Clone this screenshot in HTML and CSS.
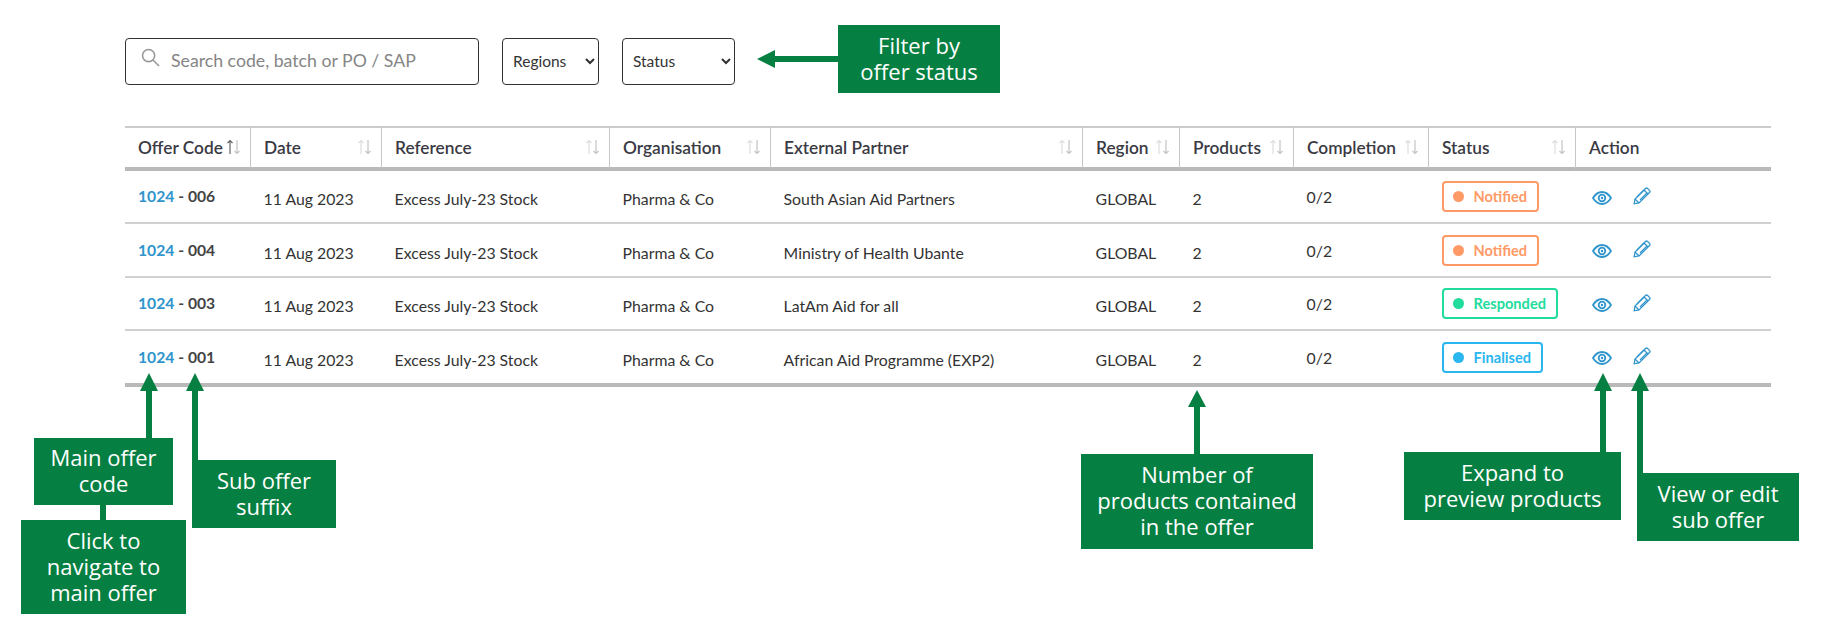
FILE: index.html
```html
<!DOCTYPE html>
<html lang="en">
<head>
<meta charset="utf-8">
<title>Offers</title>
<link rel="stylesheet" href="styles.css">
</head>
<body>
<main class="page">
  <div class="toolbar">
    <label class="search">
      <svg class="search-icon" viewBox="0 0 20 20" aria-hidden="true"><circle cx="8" cy="8" r="6.4"/><path d="M12.6 12.6 19 19"/></svg>
      <input type="text" placeholder="Search code, batch or PO / SAP">
    </label>
    <select class="select select-region"><option>Regions</option></select>
    <select class="select select-status"><option>Status</option></select>
  </div>

  <table class="offers">
    <colgroup>
      <col class="c1"><col class="c2"><col class="c3"><col class="c4"><col class="c5"><col class="c6"><col class="c7"><col class="c8"><col class="c9"><col class="c10">
    </colgroup>
    <thead>
      <tr>
        <th><span class="th-inner">Offer Code<svg class="sort sort-active" viewBox="0 0 15 16"><path class="up" d="M4 15V1.500M1.500 4 4 1.500 6.500 4"/><path class="down" d="M11 1v13.500M8.500 12 11 14.500 13.500 12"/></svg></span></th>
        <th><span class="th-inner">Date<svg class="sort" viewBox="0 0 15 16"><path class="up" d="M4 15V1.500M1.500 4 4 1.500 6.500 4"/><path class="down" d="M11 1v13.500M8.500 12 11 14.500 13.500 12"/></svg></span></th>
        <th><span class="th-inner">Reference<svg class="sort" viewBox="0 0 15 16"><path class="up" d="M4 15V1.500M1.500 4 4 1.500 6.500 4"/><path class="down" d="M11 1v13.500M8.500 12 11 14.500 13.500 12"/></svg></span></th>
        <th><span class="th-inner">Organisation<svg class="sort" viewBox="0 0 15 16"><path class="up" d="M4 15V1.500M1.500 4 4 1.500 6.500 4"/><path class="down" d="M11 1v13.500M8.500 12 11 14.500 13.500 12"/></svg></span></th>
        <th><span class="th-inner">External Partner<svg class="sort" viewBox="0 0 15 16"><path class="up" d="M4 15V1.500M1.500 4 4 1.500 6.500 4"/><path class="down" d="M11 1v13.500M8.500 12 11 14.500 13.500 12"/></svg></span></th>
        <th><span class="th-inner">Region<svg class="sort" viewBox="0 0 15 16"><path class="up" d="M4 15V1.500M1.500 4 4 1.500 6.500 4"/><path class="down" d="M11 1v13.500M8.500 12 11 14.500 13.500 12"/></svg></span></th>
        <th><span class="th-inner">Products<svg class="sort" viewBox="0 0 15 16"><path class="up" d="M4 15V1.500M1.500 4 4 1.500 6.500 4"/><path class="down" d="M11 1v13.500M8.500 12 11 14.500 13.500 12"/></svg></span></th>
        <th><span class="th-inner">Completion<svg class="sort" viewBox="0 0 15 16"><path class="up" d="M4 15V1.500M1.500 4 4 1.500 6.500 4"/><path class="down" d="M11 1v13.500M8.500 12 11 14.500 13.500 12"/></svg></span></th>
        <th><span class="th-inner">Status<svg class="sort" viewBox="0 0 15 16"><path class="up" d="M4 15V1.500M1.500 4 4 1.500 6.500 4"/><path class="down" d="M11 1v13.500M8.500 12 11 14.500 13.500 12"/></svg></span></th>
        <th>Action</th>
      </tr>
    </thead>
    <tbody>
      <tr class="r1">
        <td class="code"><a>1024</a> - 006</td><td class="low">11 Aug 2023</td><td class="low">Excess July-23 Stock</td><td class="low">Pharma &amp; Co</td><td class="low">South Asian Aid Partners</td><td class="low">GLOBAL</td><td class="low">2</td><td class="plain">0/2</td>
        <td class="plain"><span class="badge notified"><i></i>Notified</span></td>
        <td class="plain"><span class="actions"><svg class="eye" viewBox="0 0 20 14"><path d="M1 7C3.500 3 6.500 1 10 1s6.500 2 9 6c-2.500 4-5.500 6-9 6S3.500 11 1 7Z"/><circle cx="10" cy="7" r="3.300"/><circle class="pupil" cx="10" cy="7" r="1.200"/></svg><svg class="pencil" viewBox="0 0 18 18"><path d="M1.200 16.800 2 12 12.500 1.500a1.500 1.500 0 0 1 2.100 0l1.900 1.900a1.500 1.500 0 0 1 0 2.100L6 16Z"/><path d="M2 12l4 4M11 3l4 4M4 10l7-7M7 13l7-7"/></svg></span></td>
      </tr>
      <tr class="r2">
        <td class="code"><a>1024</a> - 004</td><td class="low">11 Aug 2023</td><td class="low">Excess July-23 Stock</td><td class="low">Pharma &amp; Co</td><td class="low">Ministry of Health Ubante</td><td class="low">GLOBAL</td><td class="low">2</td><td class="plain">0/2</td>
        <td class="plain"><span class="badge notified"><i></i>Notified</span></td>
        <td class="plain"><span class="actions"><svg class="eye" viewBox="0 0 20 14"><path d="M1 7C3.500 3 6.500 1 10 1s6.500 2 9 6c-2.500 4-5.500 6-9 6S3.500 11 1 7Z"/><circle cx="10" cy="7" r="3.300"/><circle class="pupil" cx="10" cy="7" r="1.200"/></svg><svg class="pencil" viewBox="0 0 18 18"><path d="M1.200 16.800 2 12 12.500 1.500a1.500 1.500 0 0 1 2.100 0l1.900 1.900a1.500 1.500 0 0 1 0 2.100L6 16Z"/><path d="M2 12l4 4M11 3l4 4M4 10l7-7M7 13l7-7"/></svg></span></td>
      </tr>
      <tr class="r3">
        <td class="code"><a>1024</a> - 003</td><td class="low">11 Aug 2023</td><td class="low">Excess July-23 Stock</td><td class="low">Pharma &amp; Co</td><td class="low">LatAm Aid for all</td><td class="low">GLOBAL</td><td class="low">2</td><td class="plain">0/2</td>
        <td class="plain"><span class="badge responded"><i></i>Responded</span></td>
        <td class="plain"><span class="actions"><svg class="eye" viewBox="0 0 20 14"><path d="M1 7C3.500 3 6.500 1 10 1s6.500 2 9 6c-2.500 4-5.500 6-9 6S3.500 11 1 7Z"/><circle cx="10" cy="7" r="3.300"/><circle class="pupil" cx="10" cy="7" r="1.200"/></svg><svg class="pencil" viewBox="0 0 18 18"><path d="M1.200 16.800 2 12 12.500 1.500a1.500 1.500 0 0 1 2.100 0l1.900 1.900a1.500 1.500 0 0 1 0 2.100L6 16Z"/><path d="M2 12l4 4M11 3l4 4M4 10l7-7M7 13l7-7"/></svg></span></td>
      </tr>
      <tr class="r4">
        <td class="code"><a>1024</a> - 001</td><td class="low">11 Aug 2023</td><td class="low">Excess July-23 Stock</td><td class="low">Pharma &amp; Co</td><td class="low">African Aid Programme (EXP2)</td><td class="low">GLOBAL</td><td class="low">2</td><td class="plain">0/2</td>
        <td class="plain"><span class="badge finalised"><i></i>Finalised</span></td>
        <td class="plain"><span class="actions"><svg class="eye" viewBox="0 0 20 14"><path d="M1 7C3.500 3 6.500 1 10 1s6.500 2 9 6c-2.500 4-5.500 6-9 6S3.500 11 1 7Z"/><circle cx="10" cy="7" r="3.300"/><circle class="pupil" cx="10" cy="7" r="1.200"/></svg><svg class="pencil" viewBox="0 0 18 18"><path d="M1.200 16.800 2 12 12.500 1.500a1.500 1.500 0 0 1 2.100 0l1.900 1.900a1.500 1.500 0 0 1 0 2.100L6 16Z"/><path d="M2 12l4 4M11 3l4 4M4 10l7-7M7 13l7-7"/></svg></span></td>
      </tr>
    </tbody>
  </table>

  <svg class="arrows" viewBox="0 0 1834 635" aria-hidden="true">
    <path d="M838 56H775V50L757 59 775 68V62H838Z"/>
    <path d="M146 438V391H140L149 373 158 391H152V438Z"/>
    <path d="M192 460V391H186L195 373 204 391H198V460Z"/>
    <rect x="100" y="505" width="6" height="15"/>
    <path d="M1194 454V407H1188L1197 390 1206 407H1200V454Z"/>
    <path d="M1600 452V391H1594L1603 373 1612 391H1606V452Z"/>
    <path d="M1637 473V391H1631L1640 373 1649 391H1643V473Z"/>
  </svg>

  <div class="note note-filter">Filter by<br>offer status</div>
  <div class="note note-main">Main offer<br>code</div>
  <div class="note note-click">Click to<br>navigate to<br>main offer</div>
  <div class="note note-sub">Sub offer<br>suffix</div>
  <div class="note note-number">Number of<br>products contained<br>in the offer</div>
  <div class="note note-expand">Expand to<br>preview products</div>
  <div class="note note-view">View or edit<br>sub offer</div>
</main>
</body>
</html>
```
FILE: styles.css
```css
* { box-sizing: border-box; }
html, body { margin: 0; background: #fff; }
body { font-family: Lato, "Liberation Sans", sans-serif; color: #333; }

.page {
  position: relative;
  width: 1834px;
  height: 635px;
  padding: 38px 63px 0 125px;
  overflow: hidden;
}

/* toolbar */
.toolbar { display: flex; height: 47px; margin-bottom: 41px; }
.search {
  display: flex;
  align-items: center;
  width: 354px;
  border: 1px solid #333;
  border-radius: 4px;
  padding-left: 15px;
}
.search-icon {
  width: 19px;
  height: 19px;
  flex: none;
  margin: -9px 11px 0 0;
  fill: none;
  stroke: #999;
  stroke-width: 1.700;
}
.search input {
  flex: 1;
  min-width: 0;
  border: 0;
  outline: 0;
  padding: 0;
  margin-top: -2px;
  font: 17.7px Lato, sans-serif;
  background: transparent;
}
.search input::placeholder { color: #858585; opacity: 1; }
.select {
  height: 47px;
  margin-left: 23px;
  padding: 0 2px 2px 6px;
  border: 1px solid #333;
  border-radius: 4px;
  background: #fff;
  color: #333;
  font: 15.5px Lato, sans-serif;
}
.select-region { width: 97px; }
.select-status { width: 113px; }

/* table */
.offers {
  width: 1646px;
  table-layout: fixed;
  border-collapse: separate;
  border-spacing: 0;
}
.c1 { width: 125px; }
.c2 { width: 131px; }
.c3 { width: 228px; }
.c4 { width: 161px; }
.c5 { width: 312px; }
.c6 { width: 97px; }
.c7 { width: 114px; }
.c8 { width: 135px; }
.c9 { width: 147px; }
.c10 { width: 196px; }

.offers th {
  height: 45px;
  padding: 0 9px 1px 13px;
  border-top: 2px solid #ccc;
  border-bottom: 4px solid #b9b9b9;
  border-left: 1px solid #c6c6c6;
  text-align: left;
  font-size: 17.3px;
  font-weight: 600;
  color: #3a3a44;
  white-space: nowrap;
}
.offers th:first-child { border-left: 0; }
.th-inner { display: flex; justify-content: space-between; align-items: center; }
.sort {
  width: 15px;
  height: 16px;
  flex: none;
  fill: none;
  stroke-width: 1.200;
}
.sort .up { stroke: #dedede; }
.sort .down { stroke: #c4c4c4; }
.sort-active .up { stroke: #666; }

.offers td {
  padding: 0 4px 0 13.600px;
  border-bottom: 2px solid #d0d0d0;
  font-size: 15.8px;
  white-space: nowrap;
  vertical-align: middle;
}
.r1 td { height: 53px; }
.r2 td { height: 54px; }
.r3 td { height: 53px; }
.r4 td { height: 56px; border-bottom: 4px solid #b9b9b9; }
.offers td.low { padding-top: 4px; }
.offers td.code { padding: 0 4px 1px 13px; font-size: 15.7px; font-weight: 700; color: #444; }
.offers td.code a { color: #2f95cc; }

/* status */
.badge {
  display: inline-flex;
  align-items: center;
  height: 31px;
  padding: 0 10px 0 9px;
  border: 2px solid currentColor;
  border-radius: 4px;
  font-size: 14.6px;
  font-weight: 700;
}
.badge i {
  width: 11px;
  height: 11px;
  margin-right: 10px;
  border-radius: 50%;
  background: currentColor;
}
.notified { color: #ff9a66; }
.responded { color: #22dc9c; }
.finalised { color: #2ab6ef; }

/* action icons */
.actions { display: flex; align-items: center; gap: 21px; padding: 2px 0 0 3.400px; }
.eye { width: 20px; height: 14px; fill: none; stroke: #2f95cc; stroke-width: 1.800; }
.eye .pupil { fill: #2f95cc; stroke: none; }
.pencil { width: 18px; height: 18px; margin-top: -4px; fill: none; stroke: #2f95cc; stroke-width: 1.300; }

/* annotations */
.arrows {
  position: absolute;
  left: 0;
  top: 0;
  width: 1834px;
  height: 635px;
  fill: #067f42;
  pointer-events: none;
}
.note {
  position: absolute;
  display: flex;
  align-items: center;
  justify-content: center;
  padding-bottom: 3px;
  background: #067f42;
  color: #fff;
  font: 22px/26px "Open Sans", sans-serif;
  text-align: center;
}
.note-filter { left: 838px; top: 25px; width: 162px; height: 68px; }
.note-main { left: 34px; top: 438px; width: 139px; height: 67px; }
.note-click { left: 21px; top: 520px; width: 165px; height: 94px; }
.note-sub { left: 192px; top: 460px; width: 144px; height: 68px; }
.note-number { left: 1081px; top: 454px; width: 232px; height: 95px; }
.note-expand { left: 1404px; top: 452px; width: 217px; height: 68px; }
.note-view { left: 1637px; top: 473px; width: 162px; height: 68px; }
```
